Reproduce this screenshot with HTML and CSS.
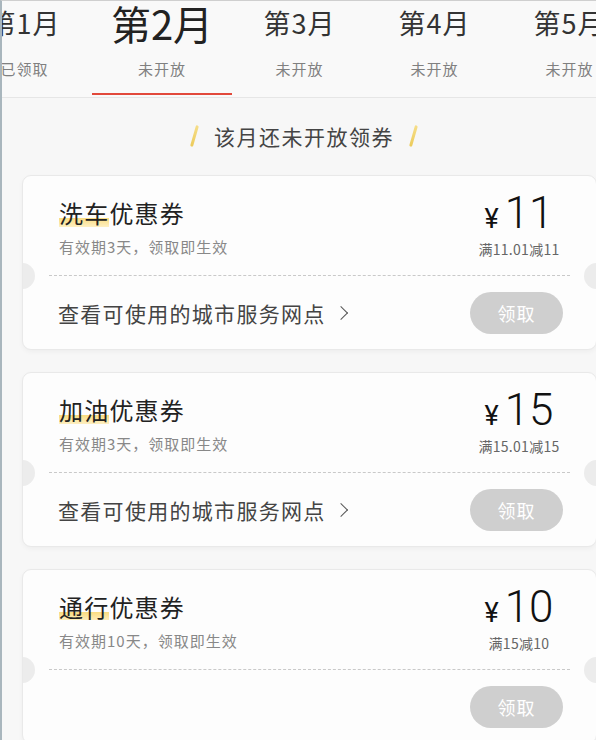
FILE: index.html
```html
<!DOCTYPE html>
<html lang="zh-CN">
<head>
    <meta charset="UTF-8">
    <meta name="viewport" content="width=device-width, initial-scale=1.0">
    <title>每月领券</title>
    <link rel="stylesheet" href="styles.css">
</head>
<body>
    <div class="page">
        <!-- Month tabs -->
        <div class="tabs">
            <div class="tab">
                <div class="month">第1月</div>
                <div class="state">已领取</div>
            </div>
            <div class="tab active">
                <div class="month">第2月</div>
                <div class="state">未开放</div>
                <div class="bar"></div>
            </div>
            <div class="tab">
                <div class="month">第3月</div>
                <div class="state">未开放</div>
            </div>
            <div class="tab">
                <div class="month">第4月</div>
                <div class="state">未开放</div>
            </div>
            <div class="tab">
                <div class="month">第5月</div>
                <div class="state">未开放</div>
            </div>
        </div>

        <div class="notice">
            <span class="slash"></span>
            <span>该月还未开放领券</span>
            <span class="slash"></span>
        </div>

        <!-- Coupons -->
        <div class="card">
            <div class="card-top">
                <div class="info">
                    <div class="title"><span class="mark">洗车</span>优惠券</div>
                    <div class="desc">有效期3天，领取即生效</div>
                </div>
                <div class="price">
                    <div class="amount"><span class="yen">¥</span>11</div>
                    <div class="rule">满11.01减11</div>
                </div>
            </div>
            <div class="card-bottom">
                <div class="link">查看可使用的城市服务网点<span class="arrow"></span></div>
                <button class="take">领取</button>
            </div>
        </div>

        <div class="card">
            <div class="card-top">
                <div class="info">
                    <div class="title"><span class="mark">加油</span>优惠券</div>
                    <div class="desc">有效期3天，领取即生效</div>
                </div>
                <div class="price">
                    <div class="amount"><span class="yen">¥</span>15</div>
                    <div class="rule">满15.01减15</div>
                </div>
            </div>
            <div class="card-bottom">
                <div class="link">查看可使用的城市服务网点<span class="arrow"></span></div>
                <button class="take">领取</button>
            </div>
        </div>

        <div class="card">
            <div class="card-top">
                <div class="info">
                    <div class="title"><span class="mark">通行</span>优惠券</div>
                    <div class="desc">有效期10天，领取即生效</div>
                </div>
                <div class="price">
                    <div class="amount"><span class="yen">¥</span>10</div>
                    <div class="rule">满15减10</div>
                </div>
            </div>
            <div class="card-bottom">
                <div class="link"></div>
                <button class="take">领取</button>
            </div>
        </div>
    </div>
</body>
</html>
```

FILE: styles.css
```css
body {
    margin: 0;
    padding: 0;
    background-color: #f7f7f7;
    font-family: "Noto Sans CJK SC", "Noto Sans", sans-serif;
    color: #333;
    overflow: hidden;
}
.page {
    width: 594px;
    height: 739px;
    border-left: 2px solid #a9b6bd;
    border-top: 1px solid #cfcfcf;
    overflow: hidden;
    background-color: #f7f7f7;
}
.tabs {
    display: flex;
    margin-left: -45px;
    height: 96px;
    border-bottom: 1px solid #e6e6e6;
    background-color: #f9f9f9;
}
.tab {
    flex: 0 0 135px;
    display: flex;
    flex-direction: column;
    align-items: center;
}
.month {
    height: 46px;
    line-height: 46px;
    margin-top: -1px;
    font-size: 27px;
    letter-spacing: 1px;
    color: #333;
    white-space: nowrap;
}
.tab.active .month {
    font-size: 40px;
    line-height: 50px;
    height: 50px;
    margin: -3px 0 -2px;
    letter-spacing: 0;
    color: #222;
}
.state {
    margin-top: 13px;
    line-height: 20px;
    font-size: 15px;
    color: #808080;
    letter-spacing: 1px;
}
.bar {
    margin-top: 14px;
    width: 140px;
    height: 2px;
    flex: none;
    background-color: #e2493b;
}
.notice {
    display: flex;
    justify-content: center;
    align-items: center;
    gap: 18px;
    margin: 23px 0 24px 10px;
    line-height: 30px;
    font-size: 21px;
    letter-spacing: 1.5px;
    color: #444;
}
.slash {
    width: 3px;
    height: 22px;
    border-radius: 2px;
    background: linear-gradient(#f6de8a, #eccb5a);
    transform: rotate(16deg);
}
.card {
    position: relative;
    width: 573px;
    height: 173px;
    margin: 0 0 22px 20px;
    background-color: #fdfdfd;
    border: 1px solid #e9e9e9;
    border-radius: 9px;
    box-shadow: 0 2px 5px rgba(0, 0, 0, 0.04);
    overflow: hidden;
}
/* ticket notches */
.card::before,
.card::after {
    content: "";
    position: absolute;
    top: 87px;
    width: 26px;
    height: 26px;
    border-radius: 50%;
    background-color: #ececec;
}
.card::before {
    left: -14px;
}
.card::after {
    right: -14px;
}
.card-top {
    display: flex;
    justify-content: space-between;
    height: 99px;
    margin: 0 26px;
    padding: 0 0 0 10px;
    border-bottom: 1px dashed #c9c9c9;
}
.info {
    padding-top: 22px;
}
.title {
    line-height: 30px;
    font-size: 24px;
    letter-spacing: 1.2px;
    color: #222;
}
.mark {
    background: linear-gradient(transparent 66%, #f9dc80 66%, #fdeebe 90%, transparent 90%);
}
.desc {
    margin-top: 9px;
    line-height: 20px;
    font-size: 15px;
    letter-spacing: 1px;
    color: #888;
}
.price {
    width: 102px;
    display: flex;
    flex-direction: column;
    align-items: center;
    padding-top: 16px;
}
.amount {
    font-family: Roboto, "Liberation Sans", sans-serif;
    font-weight: 300;
    font-size: 44px;
    line-height: 42px;
    color: #111;
    white-space: nowrap;
}
.yen {
    font-size: 27px;
    font-weight: 400;
    margin-right: 6px;
}
.rule {
    margin-top: 0;
    line-height: 18px;
    font-size: 14px;
    letter-spacing: 0.3px;
    color: #666;
    white-space: nowrap;
}
.card-bottom {
    display: flex;
    justify-content: space-between;
    align-items: center;
    height: 73px;
    padding: 0 33px 0 35px;
}
.link {
    font-size: 21px;
    letter-spacing: 1.3px;
    color: #444;
    display: flex;
    align-items: center;
    gap: 6px;
}
.arrow {
    width: 9px;
    height: 9px;
    margin-left: 4px;
    border-top: 1px solid #555;
    border-right: 1px solid #555;
    transform: rotate(45deg);
}
.take {
    width: 93px;
    height: 42px;
    border: none;
    border-radius: 21px;
    background-color: #cfcfcf;
    color: #fff;
    font-family: "Noto Sans CJK SC", sans-serif;
    font-size: 18px;
    letter-spacing: 1px;
    padding: 0;
}
```
